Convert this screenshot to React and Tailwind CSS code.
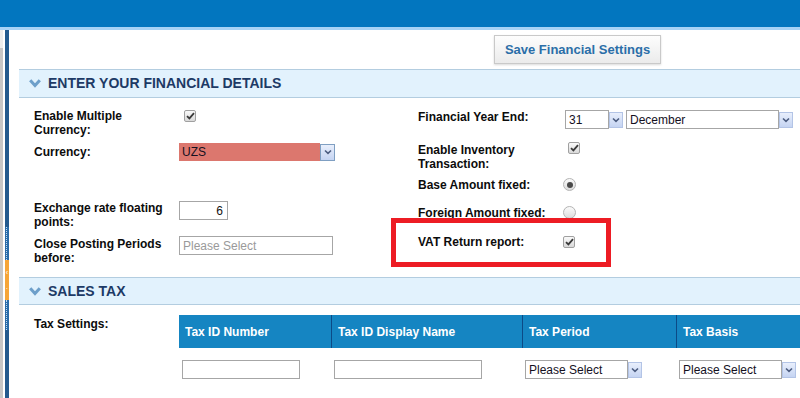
import React from 'react';

const Check = ({ className = '' }) => (
  <span className={`flex h-[12px] w-[12px] items-center justify-center rounded-[2px] border border-[#a0a0a0] bg-gradient-to-b from-[#fafafa] to-[#d9d9d9] ${className}`}>
    <svg width="9" height="8" viewBox="0 0 9 8">
      <polyline points="1,4.2 3.4,6.4 8,1.2" fill="none" stroke="#3a3a3a" strokeWidth="1.8" />
    </svg>
  </span>
);

const Radio = ({ on, className = '' }) => (
  <span className={`flex h-[13px] w-[13px] items-center justify-center rounded-full border border-[#b4b4b4] bg-gradient-to-b from-[#fbfbfb] to-[#dcdcdc] ${className}`}>
    {on && <span className="h-[6px] w-[6px] rounded-full bg-[#4a4a4a]" />}
  </span>
);

const DropBtn = ({ dark }) => (
  <span className={`flex shrink-0 items-center justify-center border bg-gradient-to-b from-[#e9effc] to-[#c5d4f2] ${dark ? 'h-[17px] w-[15px] border-[#7f9fc2]' : 'h-[16px] w-[14px] border-[#b3c4e6]'}`}>
    <svg width="8" height="6" viewBox="0 0 8 6">
      <polyline points="1,1.5 4,4.3 7,1.5" fill="none" stroke="#4d5d80" strokeWidth="1.6" />
    </svg>
  </span>
);

const Select = ({ w, text, className = '' }) => (
  <div className={`flex items-center ${className}`}>
    <div className="flex h-[19px] items-center border border-[#a6a6a6] bg-white pl-[3px] text-[12px] text-[#14101e]" style={{ width: w }}>{text}</div>
    <DropBtn />
  </div>
);

const SectionHead = ({ title, h }) => (
  <div className={`flex items-center gap-[7px] border-y border-[#b3cde0] bg-[#e2f2fd] pl-[10px] ${h}`}>
    <svg width="12" height="9" viewBox="0 0 12 9">
      <polyline points="1.2,1.2 6,6.6 10.8,1.2" fill="none" stroke="#6d9fca" strokeWidth="3" />
    </svg>
    <span className="text-[14px] font-bold uppercase text-[#1d3a66]">{title}</span>
  </div>
);

const Label = ({ children, className = '' }) => (
  <div className={`text-[12px] font-bold leading-[14px] text-[#0c0c0c] ${className}`}>{children}</div>
);

export default function App() {
  return (
    <div className="relative h-[398px] w-[800px] overflow-hidden bg-white font-['Liberation_Sans',Arial,sans-serif]">
      <div className="h-[27px] bg-[#0276bf]" />
      <div className="h-[3px] bg-[#a6d3f6]" />

      <div className="flex h-[368px]">
        {/* left rail */}
        <div className="flex w-[9px] shrink-0">
          <div className="flex w-[3px] flex-col">
            <div className="h-[18px] bg-[#ececec]" />
            <div className="flex-1 bg-[#c6c6c6]" />
          </div>
          <div className="w-[2px] bg-white" />
          <div className="flex w-[4px] flex-col bg-[#235a8e]">
            <div className="h-[197px]" />
            <div className="flex h-[33px] justify-center bg-[#2a6ca8]"><div className="w-[2px] border-l border-dotted border-[#c5dcf0]" /></div>
            <div className="flex h-[40px] flex-col items-center justify-center gap-[9px] bg-[#f6a537] text-[7px] leading-none text-white">
              <span>‹</span>
              <span>·</span>
            </div>
            <div className="flex h-[30px] justify-center bg-[#2a6ca8]"><div className="w-[2px] border-l border-dotted border-[#c5dcf0]" /></div>
          </div>
        </div>

        {/* main */}
        <div className="flex-1 pl-[10px]">
          <div className="h-[39px] pt-[5px]">
            <button className="ml-[475px] h-[29px] w-[167px] border border-[#c9c9c9] bg-gradient-to-b from-[#fdfdfd] to-[#ebebeb] text-[13px] font-bold text-[#2b6ea8] shadow-[0_1px_2px_rgba(0,0,0,0.15)]">
              Save Financial Settings
            </button>
          </div>

          <SectionHead title="Enter your financial details" h="h-[29px]" />

          <div className="flex h-[179px]">
            {/* left column */}
            <div className="w-[371px] pl-[15px]">
              <div className="mt-[11px] grid grid-cols-[145px_1fr]">
                <Label>Enable Multiple<br />Currency:</Label>
                <Check className="ml-[5px] mt-[1px]" />
              </div>
              <div className="mt-[6px] grid grid-cols-[145px_1fr] items-start">
                <Label className="pt-[2px]">Currency:</Label>
                <div className="flex items-center">
                  <div className="flex h-[18px] w-[141px] items-center bg-[#dc776e] pl-[3px] text-[12px] text-[#14101e]">UZS</div>
                  <DropBtn dark />
                </div>
              </div>
              <div className="mt-[40px] grid grid-cols-[145px_1fr]">
                <Label>Exchange rate floating<br />points:</Label>
                <div className="flex h-[19px] w-[49px] items-center justify-end border border-[#a6a6a6] pr-[4px] text-[12px] text-[#111]">6</div>
              </div>
              <div className="mt-[7px] grid grid-cols-[145px_1fr]">
                <Label className="pt-[1px]">Close Posting Periods<br />before:</Label>
                <div className="flex h-[19px] w-[154px] items-center border border-[#a6a6a6] pl-[3px] text-[12px] text-[#9a9a9a]">Please Select</div>
              </div>
            </div>

            {/* right column */}
            <div className="flex-1 pl-[28px]">
              <div className="mt-[12px] grid grid-cols-[147px_1fr]">
                <Label>Financial Year End:</Label>
                <div className="flex items-center">
                  <Select w={44} text="31" />
                  <Select w={153} text="December" className="ml-[3px]" />
                </div>
              </div>
              <div className="mt-[14px] grid grid-cols-[147px_1fr]">
                <Label>Enable Inventory<br />Transaction:</Label>
                <Check className="ml-[3px] -mt-[1px]" />
              </div>
              <div className="mt-[7px] grid grid-cols-[145px_1fr]">
                <Label>Base Amount fixed:</Label>
                <Radio on />
              </div>
              <div className="mt-[14px] grid grid-cols-[145px_1fr]">
                <Label>Foreign Amount fixed:</Label>
                <Radio />
              </div>
              <div className="mt-[15px] grid grid-cols-[145px_1fr]">
                <Label>VAT Return report:</Label>
                <Check className="mt-[1px]" />
              </div>
            </div>
          </div>

          <SectionHead title="Sales Tax" h="h-[28px]" />

          <div className="mt-[10px] flex pl-[15px]">
            <Label className="w-[145px] shrink-0 pt-[2px]">Tax Settings:</Label>
            <div className="flex-1">
              <div className="grid h-[33px] grid-cols-[152px_191px_154px_1fr] bg-[#1585c2] text-[12px] font-bold text-white">
                <div className="flex items-center pl-[6px]">Tax ID Number</div>
                <div className="flex items-center border-l border-[#0c4a86] pl-[6px]">Tax ID Display Name</div>
                <div className="flex items-center border-l border-[#0c4a86] pl-[6px]">Tax Period</div>
                <div className="flex items-center border-l border-[#0c4a86] pl-[6px]">Tax Basis</div>
              </div>
              <div className="mt-[12px] grid grid-cols-[152px_191px_154px_1fr]">
                <div className="pl-[3px]"><div className="h-[19px] w-[118px] border border-[#a6a6a6]" /></div>
                <div className="pl-[3px]"><div className="h-[19px] w-[148px] border border-[#a6a6a6]" /></div>
                <div className="pl-[3px]"><Select w={103} text="Please Select" /></div>
                <div className="pl-[3px]"><Select w={103} text="Please Select" /></div>
              </div>
            </div>
          </div>
        </div>
      </div>

      {/* annotation box */}
      <div className="absolute left-[391px] top-[218px] h-[49px] w-[220px] border-[5px] border-[#ed1c24]" />
    </div>
  );
}
